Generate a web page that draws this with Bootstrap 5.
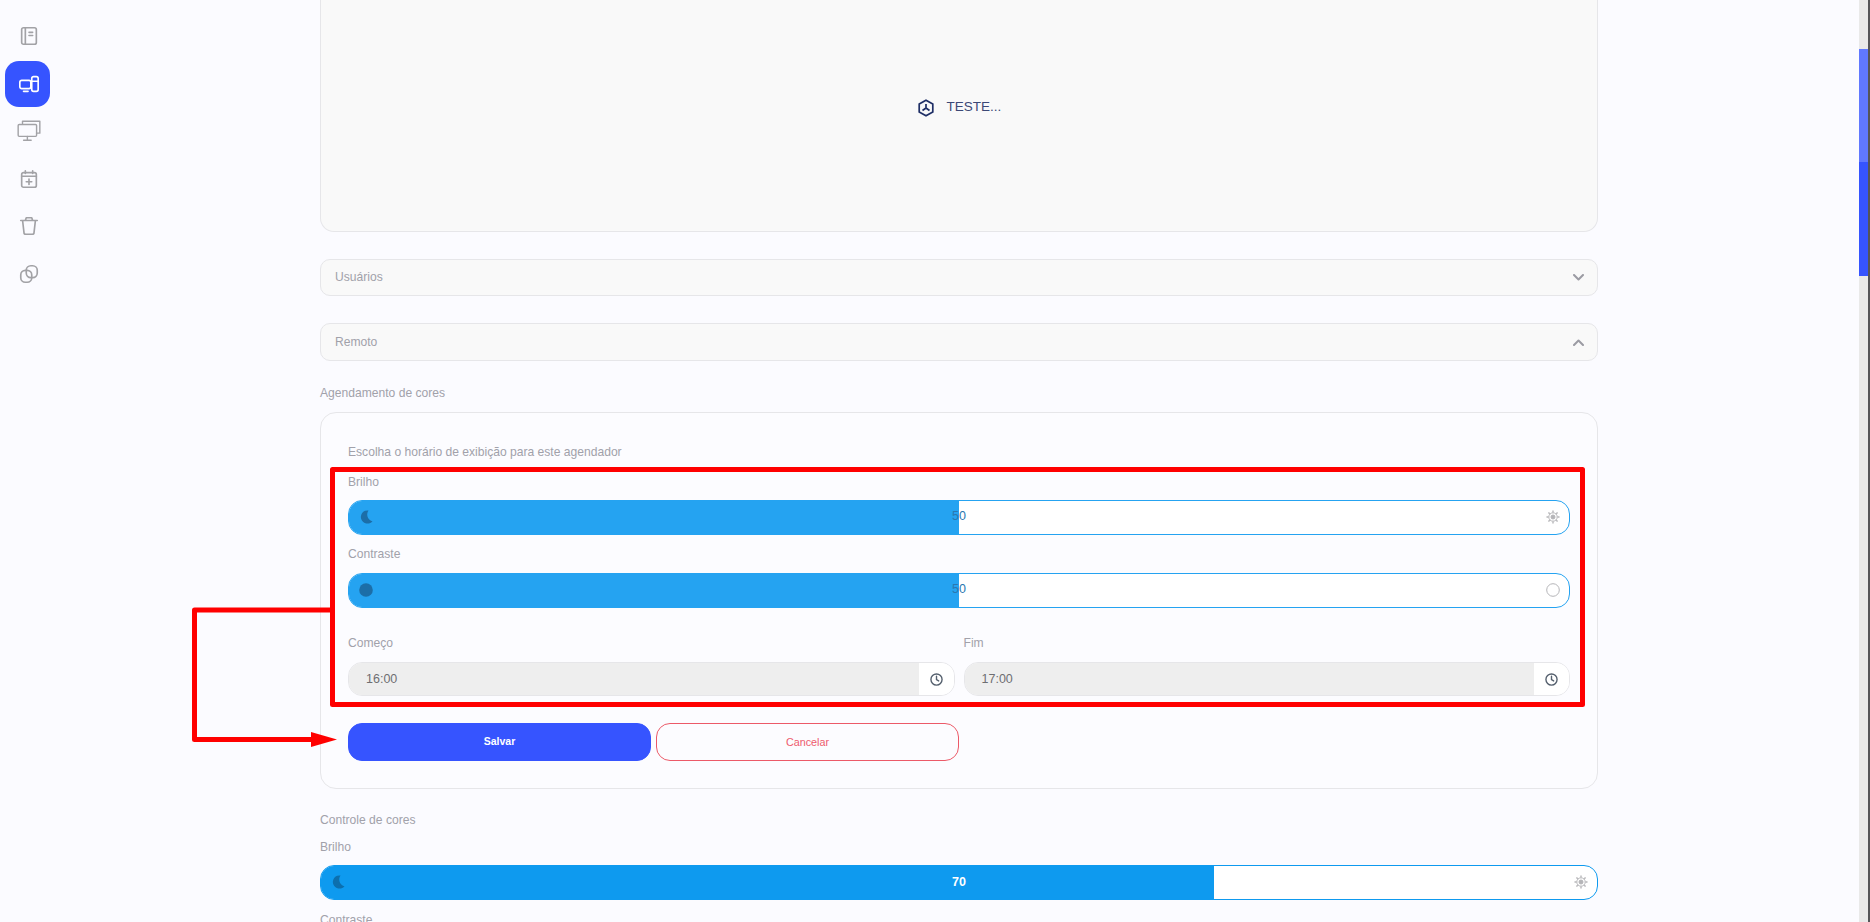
<!doctype html>
<html lang="pt-BR"><head><meta charset="utf-8"><title>Agendador</title>
<link href="https://cdn.jsdelivr.net/npm/bootstrap@5.3.0/dist/css/bootstrap.min.css" rel="stylesheet">
<style>
html,body{height:922px;overflow:hidden;}
body{background:#fbfbff;font-family:"Liberation Sans",Arial,sans-serif;font-size:12.1px;color:#a1a1aa;position:relative;}
.shell{height:922px;padding-right:11px;}
.side{width:58px;padding:13.5px 0 0 5px;gap:2px;}
.side-item{width:45px;height:45.5px;border-radius:14px;color:#a2a2a6;padding-left:3px;}
.side-item.on{background:#3654ff;color:#fff;}
.side-item svg{width:22px;height:22px;fill:none;stroke:currentColor;stroke-width:1.8;stroke-linecap:round;stroke-linejoin:round;}
.side-item svg.wide{width:26px;height:26px;stroke-width:1.3;}
.body-col{width:1278px;margin-left:262px;}
.hero{height:232px;background:#f9f9f9;border:1px solid #e6e6e9;border-top:0;border-radius:0 0 14px 14px;color:#3c4876;gap:12px;padding-bottom:16px;font-size:13.5px;}
.fold{height:37px;background:#f9f9f9;border:1px solid #e6e6e9;border-radius:10px;padding:0 13px 0 14px;margin-top:27px;}
.fold.tall{height:38px;}
.fold svg{width:11px;height:7px;fill:none;stroke:#9b9ba3;stroke-width:2;stroke-linecap:round;stroke-linejoin:round;}
.cap{line-height:14px;}
.panel{height:377px;border:1px solid #e6e6e9;border-radius:16px;margin-top:12px;padding:32px 27px 0;background:#fcfcff;}
.meter{height:35px;border-radius:14px;position:relative;background:#fff;border:1px solid #25a3f1;overflow:hidden;}
.meter .progress-bar{background:#25a3f1;}
.meter.solid{border-color:#0e9aef;}
.meter.solid .progress-bar{background:#0e9aef;}
.meter-val{position:absolute;left:0;right:0;top:0;bottom:0;text-align:center;line-height:31px;font-size:12.5px;color:#2a78b0;}
.meter.solid .meter-val{color:#fff;font-weight:700;line-height:33px;}
.meter-ic{position:absolute;top:9px;width:14px;height:14px;}
.meter-ic.l{left:10px;}
.meter-ic.r{right:9px;}
.time-row{gap:9px;margin-top:28px;}
.time-box{flex:1 1 0;min-width:0;}
.time-lab{line-height:14px;margin-bottom:12px;}
.time-in{height:34px;border:1px solid #e6e6e9;border-radius:14px;overflow:hidden;}
.time-val{background:#eeeeee;padding-left:17px;font-size:12.5px;color:#6e6e72;line-height:32px;}
.time-btn{width:35px;background:#fff;}
.time-btn svg{width:13px;height:13px;fill:none;stroke:#55606e;stroke-width:1.5;stroke-linecap:round;}
.btn-row{gap:5px;margin-top:27px;width:611px;}
.btn-s{flex:1 1 0;height:38px;border-radius:14px;font-size:10.8px;padding:0;}
.btn-save{background:#3654ff;border:1px solid #3654ff;color:#fff;font-weight:700;font-size:10.5px;}
.btn-cancel{background:transparent;border:1px solid #ec5a68;color:#ee5b6d;}
.sb{position:absolute;top:0;right:2px;width:9px;height:922px;background:#e9e9e9;}
.sb-a{height:113px;margin-top:49px;background:#6078ff;}
.sb-b{height:114px;background:#3654ff;}
.sb-edge{position:absolute;top:0;right:0;width:2px;height:922px;background:#555558;}
.notes{position:absolute;left:0;top:0;width:1870px;height:922px;pointer-events:none;}
</style></head><body>
<div class="shell d-flex">
<nav class="side d-flex flex-column flex-shrink-0">
<div class="side-item d-flex align-items-center justify-content-center"><svg viewBox="0 0 24 24"><rect x="4" y="3" width="16" height="18" rx="2"/><path d="M8 3v18M12 8h4M12 11.500h4"/></svg></div>
<div class="side-item on d-flex align-items-center justify-content-center"><svg viewBox="0 0 24 24"><rect x="2" y="8" width="12" height="9" rx="2"/><path d="M6 20h5"/><rect x="15" y="4" width="7" height="16" rx="2"/><path d="M15 9h7"/></svg></div>
<div class="side-item d-flex align-items-center justify-content-center"><svg class="wide" viewBox="0 0 24 24"><path d="M6 5V3h16v11h-3"/><rect x="2" y="6" width="17" height="11" rx="1"/><path d="M10.500 17v3M7 20.500h7"/></svg></div>
<div class="side-item d-flex align-items-center justify-content-center"><svg viewBox="0 0 24 24"><rect x="4" y="5" width="16" height="16" rx="2"/><path d="M4 9h16M8 3v3M16 3v3M12 12v6M9 15h6"/></svg></div>
<div class="side-item d-flex align-items-center justify-content-center"><svg viewBox="0 0 24 24"><path d="M3 6h18M8 6l1-3h6l1 3M5 6l1.500 13a2 2 0 0 0 2 2h7a2 2 0 0 0 2-2L19 6"/></svg></div>
<div class="side-item d-flex align-items-center justify-content-center"><svg viewBox="0 0 24 24"><rect x="9" y="3" width="12" height="13" rx="5"/><rect x="3" y="8" width="12" height="13" rx="5"/></svg></div>
</nav>
<main class="body-col flex-shrink-0">
<div class="hero d-flex align-items-center justify-content-center">
<svg width="18" height="18" viewBox="0 0 18 18" fill="none" stroke="#1f2f66" stroke-width="1.700"><path d="M9 1.200l6.800 3.900v7.800L9 16.800l-6.800-3.900V5.100z"/><path d="M9 5V9l-3.500 2.500M9 9l3.500 2.500"/></svg>
<span>TESTE...</span>
</div>
<div class="fold d-flex align-items-center justify-content-between"><span>Usuários</span><svg viewBox="0 0 11 7"><path d="M1 1l4.500 4.500L10 1"/></svg></div>
<div class="fold tall d-flex align-items-center justify-content-between"><span>Remoto</span><svg viewBox="0 0 11 7"><path d="M1 6L5.500 1.500 10 6"/></svg></div>
<div class="cap" style="margin-top:25px">Agendamento de cores</div>
<section class="panel">
<div class="cap">Escolha o horário de exibição para este agendador</div>
<div class="cap" style="margin-top:16px">Brilho</div>
<div class="progress meter" style="margin-top:11px">
<div class="progress-bar" style="width:50%"></div><span class="meter-val">50</span>
<svg class="meter-ic l" viewBox="0 0 14 14"><path d="M9.500 .5a6.600 6.600 0 1 0 4 10.800A7 7 0 0 1 9.500 .5z" fill="#1c6ea8"/></svg>
<svg class="meter-ic r" viewBox="0 0 14 14" fill="none" stroke="#b5b5b8"><circle cx="7" cy="7" r="4.200"/><circle cx="7" cy="7" r="2" fill="#b5b5b8"/><path stroke-width="1.400" d="M7 .5v2M7 11.500v2M.5 7h2M11.500 7h2M2.400 2.400l1.400 1.400M10.200 10.200l1.400 1.400M11.600 2.400l-1.400 1.400M3.800 10.200l-1.400 1.400"/></svg>
</div>
<div class="cap" style="margin-top:12px">Contraste</div>
<div class="progress meter" style="margin-top:12px">
<div class="progress-bar" style="width:50%"></div><span class="meter-val">50</span>
<svg class="meter-ic l" viewBox="0 0 14 14"><circle cx="7" cy="7" r="6.800" fill="#1c6ea8"/></svg>
<svg class="meter-ic r" viewBox="0 0 14 14" fill="none" stroke="#b5b5b8"><circle cx="7" cy="7" r="6.300"/></svg>
</div>
<div class="time-row d-flex">
<div class="time-box"><div class="time-lab">Começo</div><div class="time-in d-flex"><div class="time-val flex-grow-1">16:00</div><div class="time-btn d-flex align-items-center justify-content-center"><svg viewBox="0 0 14 14"><circle cx="7" cy="7" r="6"/><path d="M7 3.500V7l2.300 1.500"/></svg></div></div></div>
<div class="time-box"><div class="time-lab">Fim</div><div class="time-in d-flex"><div class="time-val flex-grow-1">17:00</div><div class="time-btn d-flex align-items-center justify-content-center"><svg viewBox="0 0 14 14"><circle cx="7" cy="7" r="6"/><path d="M7 3.500V7l2.300 1.500"/></svg></div></div></div>
</div>
<div class="btn-row d-flex"><button class="btn btn-s btn-save" type="button">Salvar</button><button class="btn btn-s btn-cancel" type="button">Cancelar</button></div>
</section>
<div class="cap" style="margin-top:24px">Controle de cores</div>
<div class="cap" style="margin-top:13px">Brilho</div>
<div class="progress meter solid" style="margin-top:11px">
<div class="progress-bar" style="width:70%"></div><span class="meter-val">70</span>
<svg class="meter-ic l" viewBox="0 0 14 14"><path d="M9.500 .5a6.600 6.600 0 1 0 4 10.800A7 7 0 0 1 9.500 .5z" fill="#0c6fae"/></svg>
<svg class="meter-ic r" viewBox="0 0 14 14" fill="none" stroke="#b5b5b8"><circle cx="7" cy="7" r="4.200"/><circle cx="7" cy="7" r="2" fill="#b5b5b8"/><path stroke-width="1.400" d="M7 .5v2M7 11.500v2M.5 7h2M11.500 7h2M2.400 2.400l1.400 1.400M10.200 10.200l1.400 1.400M11.600 2.400l-1.400 1.400M3.800 10.200l-1.400 1.400"/></svg>
</div>
<div class="cap" style="margin-top:13px">Contraste</div>
</main>
</div>
<div class="sb"><div class="sb-a"></div><div class="sb-b"></div></div><div class="sb-edge"></div>
<svg class="notes" viewBox="0 0 1870 922"><g fill="none" stroke="#ff0000" stroke-width="5" stroke-linejoin="round"><rect x="332.500" y="469.500" width="1250" height="235"/><path d="M332 610H194.500V739.500H315"/></g><path d="M311 732l26 7.500-26 7.500z" fill="#ff0000"/></svg>
</body></html>
